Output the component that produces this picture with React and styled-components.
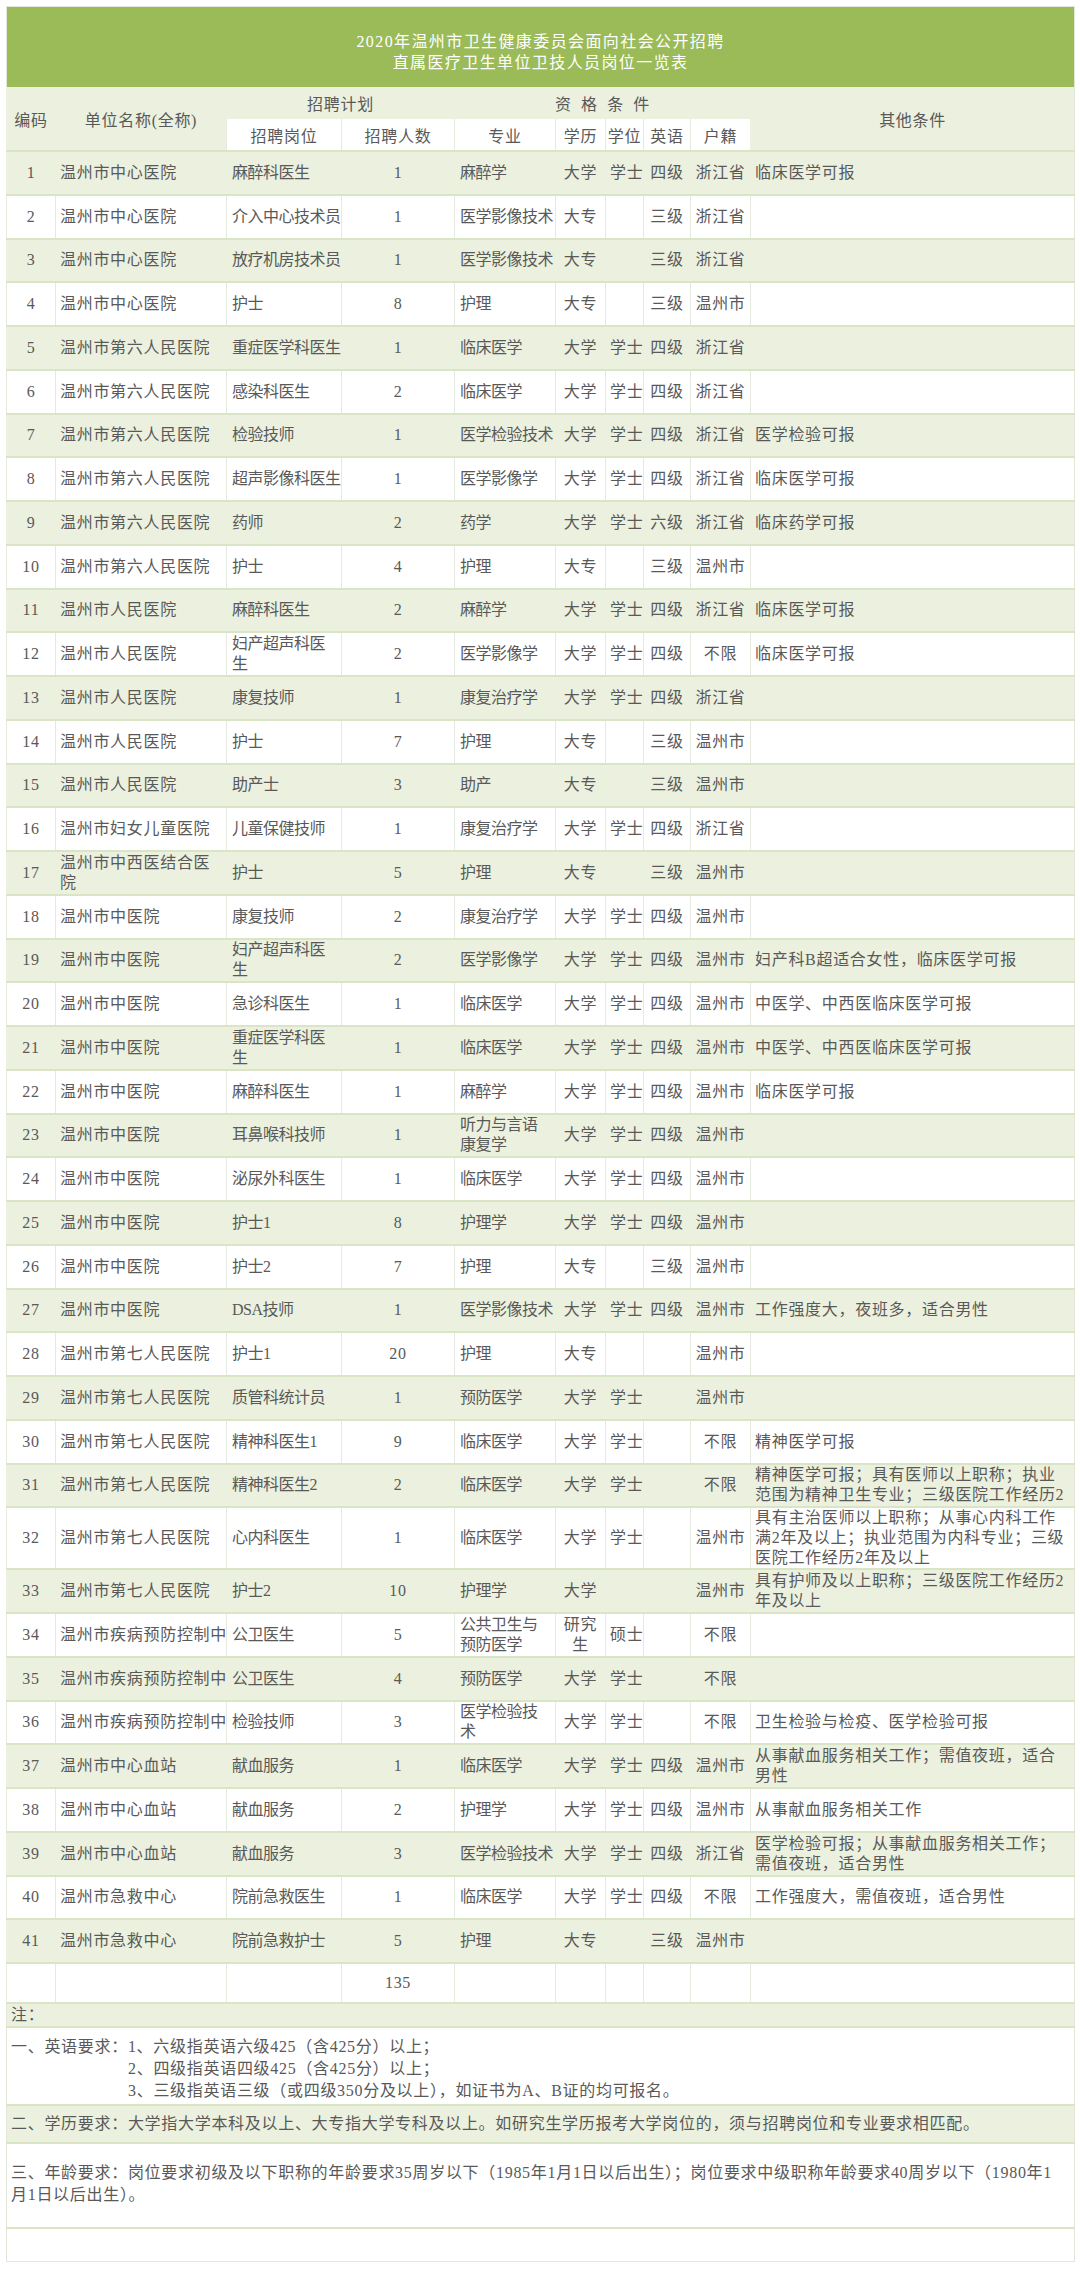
import React from 'react'
import styled, { createGlobalStyle } from 'styled-components'

const GlobalStyle = createGlobalStyle`
    html, body {
        margin: 0;
        padding: 0;
        background: #ffffff;
    }
    body {
        font-family: "Liberation Serif", "Noto Sans CJK SC", serif;
        color: #595959;
    }
`

const Page = styled.div`
    padding: 6px 6px 8px;
`

const Sheet = styled.table`
    width: 1068px;
    table-layout: fixed;
    border-collapse: collapse;
    border: 1px solid #e2e7d9;
    font-size: 16px;
    letter-spacing: 0.7px;
    line-height: 20px;
`

const Col = styled.col`
    width: ${p => p.$w}px;
`

const TitleCell = styled.td`
    background: #9bbb59;
    color: #ffffff;
    text-align: center;
    letter-spacing: 1.4px;
    line-height: 21px;
    padding: 24px 0 14px;
`

const HeadRow = styled.tr`
    height: ${p => p.$h}px;
`

const HeadCell = styled.th`
    font-weight: normal;
    text-align: center;
    vertical-align: middle;
    padding: 4px 0 0;
    white-space: pre;
    background: ${p => (p.$light ? '#ffffff' : '#ebf1de')};
    border-left: 1px solid ${p => (p.$light ? '#e6e9e0' : '#ebf1de')};
`

const Row = styled.tr`
    background: ${p => (p.$shade ? '#ebf1de' : '#ffffff')};
    & > td {
        border-top: 2px solid #dae5c5;
        border-left: 1px solid ${p => (p.$shade ? '#ebf1de' : '#e6e9e0')};
    }
`

const Cell = styled.td`
    height: ${p => p.$h || 41.75}px;
    padding: ${p => (p.$tight ? '0 2px 0 5px' : '0 4px')};
    letter-spacing: ${p => (p.$tight ? '-0.5px' : 'inherit')};
    text-align: ${p => p.$align || 'left'};
    vertical-align: middle;
    white-space: pre;
    overflow: hidden;
`

const NoteRow = styled.tr`
    background: ${p => (p.$shade ? '#ebf1de' : '#ffffff')};
    & > td {
        border-top: 2px solid #dae5c5;
    }
`

const NoteCell = styled.td`
    height: ${p => p.$h}px;
    padding: 0 4px;
    vertical-align: ${p => (p.$top ? 'top' : 'middle')};
    line-height: 22px;
    white-space: pre;
    text-align: left;
`

const NoteText = styled.div`
    padding-top: ${p => p.$pt || 0}px;
`

const Indent = styled.div`
    padding-left: 117px;
`

const cols = [49, 171, 115, 113, 101, 50, 38, 47, 60, 324]

// 编码, 单位, 岗位, 人数, 专业, 学历, 学位, 英语, 户籍, 其他
const aligns = ['center', 'left', 'left', 'center', 'left', 'center', 'center', 'center', 'center', 'left']
const tight = [false, false, true, false, true, false, false, false, false, false]

const rows = [
    [1, '温州市中心医院', '麻醉科医生', 1, '麻醉学', '大学', '学士', '四级', '浙江省', '临床医学可报'],
    [2, '温州市中心医院', '介入中心技术员', 1, '医学影像技术', '大专', '', '三级', '浙江省', ''],
    [3, '温州市中心医院', '放疗机房技术员', 1, '医学影像技术', '大专', '', '三级', '浙江省', ''],
    [4, '温州市中心医院', '护士', 8, '护理', '大专', '', '三级', '温州市', ''],
    [5, '温州市第六人民医院', '重症医学科医生', 1, '临床医学', '大学', '学士', '四级', '浙江省', ''],
    [6, '温州市第六人民医院', '感染科医生', 2, '临床医学', '大学', '学士', '四级', '浙江省', ''],
    [7, '温州市第六人民医院', '检验技师', 1, '医学检验技术', '大学', '学士', '四级', '浙江省', '医学检验可报'],
    [8, '温州市第六人民医院', '超声影像科医生', 1, '医学影像学', '大学', '学士', '四级', '浙江省', '临床医学可报'],
    [9, '温州市第六人民医院', '药师', 2, '药学', '大学', '学士', '六级', '浙江省', '临床药学可报'],
    [10, '温州市第六人民医院', '护士', 4, '护理', '大专', '', '三级', '温州市', ''],
    [11, '温州市人民医院', '麻醉科医生', 2, '麻醉学', '大学', '学士', '四级', '浙江省', '临床医学可报'],
    [12, '温州市人民医院', '妇产超声科医\n生', 2, '医学影像学', '大学', '学士', '四级', '不限', '临床医学可报'],
    [13, '温州市人民医院', '康复技师', 1, '康复治疗学', '大学', '学士', '四级', '浙江省', ''],
    [14, '温州市人民医院', '护士', 7, '护理', '大专', '', '三级', '温州市', ''],
    [15, '温州市人民医院', '助产士', 3, '助产', '大专', '', '三级', '温州市', ''],
    [16, '温州市妇女儿童医院', '儿童保健技师', 1, '康复治疗学', '大学', '学士', '四级', '浙江省', ''],
    [17, '温州市中西医结合医\n院', '护士', 5, '护理', '大专', '', '三级', '温州市', ''],
    [18, '温州市中医院', '康复技师', 2, '康复治疗学', '大学', '学士', '四级', '温州市', ''],
    [19, '温州市中医院', '妇产超声科医\n生', 2, '医学影像学', '大学', '学士', '四级', '温州市', '妇产科B超适合女性，临床医学可报'],
    [20, '温州市中医院', '急诊科医生', 1, '临床医学', '大学', '学士', '四级', '温州市', '中医学、中西医临床医学可报'],
    [21, '温州市中医院', '重症医学科医\n生', 1, '临床医学', '大学', '学士', '四级', '温州市', '中医学、中西医临床医学可报'],
    [22, '温州市中医院', '麻醉科医生', 1, '麻醉学', '大学', '学士', '四级', '温州市', '临床医学可报'],
    [23, '温州市中医院', '耳鼻喉科技师', 1, '听力与言语\n康复学', '大学', '学士', '四级', '温州市', ''],
    [24, '温州市中医院', '泌尿外科医生', 1, '临床医学', '大学', '学士', '四级', '温州市', ''],
    [25, '温州市中医院', '护士1', 8, '护理学', '大学', '学士', '四级', '温州市', ''],
    [26, '温州市中医院', '护士2', 7, '护理', '大专', '', '三级', '温州市', ''],
    [27, '温州市中医院', 'DSA技师', 1, '医学影像技术', '大学', '学士', '四级', '温州市', '工作强度大，夜班多，适合男性'],
    [28, '温州市第七人民医院', '护士1', 20, '护理', '大专', '', '', '温州市', ''],
    [29, '温州市第七人民医院', '质管科统计员', 1, '预防医学', '大学', '学士', '', '温州市', ''],
    [30, '温州市第七人民医院', '精神科医生1', 9, '临床医学', '大学', '学士', '', '不限', '精神医学可报'],
    [31, '温州市第七人民医院', '精神科医生2', 2, '临床医学', '大学', '学士', '', '不限', '精神医学可报；具有医师以上职称；执业\n范围为精神卫生专业；三级医院工作经历2'],
    [32, '温州市第七人民医院', '心内科医生', 1, '临床医学', '大学', '学士', '', '温州市', '具有主治医师以上职称；从事心内科工作\n满2年及以上；执业范围为内科专业；三级\n医院工作经历2年及以上'],
    [33, '温州市第七人民医院', '护士2', 10, '护理学', '大学', '', '', '温州市', '具有护师及以上职称；三级医院工作经历2\n年及以上'],
    [34, '温州市疾病预防控制中', '公卫医生', 5, '公共卫生与\n预防医学', '研究\n生', '硕士', '', '不限', ''],
    [35, '温州市疾病预防控制中', '公卫医生', 4, '预防医学', '大学', '学士', '', '不限', ''],
    [36, '温州市疾病预防控制中', '检验技师', 3, '医学检验技\n术', '大学', '学士', '', '不限', '卫生检验与检疫、医学检验可报'],
    [37, '温州市中心血站', '献血服务', 1, '临床医学', '大学', '学士', '四级', '温州市', '从事献血服务相关工作；需值夜班，适合\n男性'],
    [38, '温州市中心血站', '献血服务', 2, '护理学', '大学', '学士', '四级', '温州市', '从事献血服务相关工作'],
    [39, '温州市中心血站', '献血服务', 3, '医学检验技术', '大学', '学士', '四级', '浙江省', '医学检验可报；从事献血服务相关工作；\n需值夜班，适合男性'],
    [40, '温州市急救中心', '院前急救医生', 1, '临床医学', '大学', '学士', '四级', '不限', '工作强度大，需值夜班，适合男性'],
    [41, '温州市急救中心', '院前急救护士', 5, '护理', '大专', '', '三级', '温州市', ''],
]

const total = ['', '', '', 135, '', '', '', '', '', '']

function DataRow({ data, shade, h }) {
    return (
        <Row $shade={shade}>
            {data.map((v, i) => (
                <Cell key={i} $align={aligns[i]} $tight={tight[i]} $h={h}>{v}</Cell>
            ))}
        </Row>
    )
}

export default function App() {
    return (
        <Page>
            <GlobalStyle />
            <Sheet>
                <colgroup>
                    {cols.map((w, i) => <Col key={i} $w={w} />)}
                </colgroup>
                <tbody>
                    <tr>
                        <TitleCell colSpan={10}>
                            2020年温州市卫生健康委员会面向社会公开招聘<br />
                            直属医疗卫生单位卫技人员岗位一览表
                        </TitleCell>
                    </tr>
                    <HeadRow $h={32}>
                        <HeadCell rowSpan={2}>编码</HeadCell>
                        <HeadCell rowSpan={2}>单位名称(全称)</HeadCell>
                        <HeadCell colSpan={2}>招聘计划</HeadCell>
                        <HeadCell colSpan={5}>资  格  条  件</HeadCell>
                        <HeadCell rowSpan={2}>其他条件</HeadCell>
                    </HeadRow>
                    <HeadRow $h={32}>
                        <HeadCell $light>招聘岗位</HeadCell>
                        <HeadCell $light>招聘人数</HeadCell>
                        <HeadCell $light>专业</HeadCell>
                        <HeadCell $light>学历</HeadCell>
                        <HeadCell $light>学位</HeadCell>
                        <HeadCell $light>英语</HeadCell>
                        <HeadCell $light>户籍</HeadCell>
                    </HeadRow>
                    {rows.map((r, i) => (
                        <DataRow key={r[0]} data={r} shade={i % 2 === 0} />
                    ))}
                    <DataRow data={total} h={38} />
                    <NoteRow $shade>
                        <NoteCell colSpan={10} $h={20}>注：</NoteCell>
                    </NoteRow>
                    <NoteRow>
                        <NoteCell colSpan={10} $h={76} $top>
                            <NoteText $pt={8}>
                                一、英语要求：1、六级指英语六级425（含425分）以上；
                                <Indent>2、四级指英语四级425（含425分）以上；</Indent>
                                <Indent>3、三级指英语三级（或四级350分及以上），如证书为A、B证的均可报名。</Indent>
                            </NoteText>
                        </NoteCell>
                    </NoteRow>
                    <NoteRow $shade>
                        <NoteCell colSpan={10} $h={36}>二、学历要求：大学指大学本科及以上、大专指大学专科及以上。如研究生学历报考大学岗位的，须与招聘岗位和专业要求相匹配。</NoteCell>
                    </NoteRow>
                    <NoteRow>
                        <NoteCell colSpan={10} $h={83} $top>
                            <NoteText $pt={18}>
                                {'三、年龄要求：岗位要求初级及以下职称的年龄要求35周岁以下（1985年1月1日以后出生）；岗位要求中级职称年龄要求40周岁以下（1980年1\n月1日以后出生）。'}
                            </NoteText>
                        </NoteCell>
                    </NoteRow>
                    <NoteRow>
                        <NoteCell colSpan={10} $h={32} />
                    </NoteRow>
                </tbody>
            </Sheet>
        </Page>
    )
}
